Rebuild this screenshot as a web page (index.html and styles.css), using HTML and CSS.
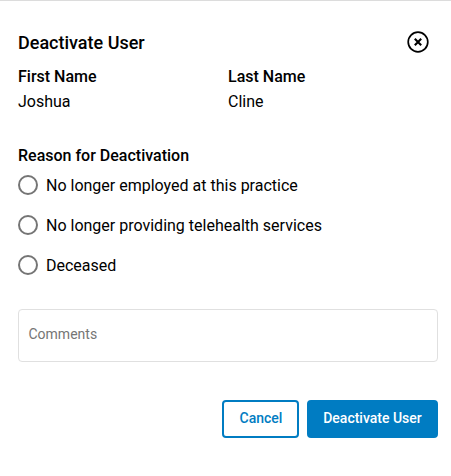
FILE: index.html
```html
<!DOCTYPE html>
<html lang="en">
<head>
    <meta charset="UTF-8">
    <title>Deactivate User</title>
    <link rel="stylesheet" href="styles.css">
</head>
<body>
    <form class="dialog">
        <div class="dialog-header">
            <h1>Deactivate User</h1>
            <button type="button" class="close" aria-label="Close">
                <svg width="22" height="22" viewBox="0 0 22 22" fill="none" stroke="#000">
                    <circle cx="11" cy="11" r="9.8" stroke-width="1.7"/>
                    <path d="M7.8 7.8l6.4 6.4M14.2 7.8l-6.4 6.4" stroke-width="2.1"/>
                </svg>
            </button>
        </div>
        <div class="names">
            <div>
                <h2>First Name</h2>
                <p>Joshua</p>
            </div>
            <div>
                <h2>Last Name</h2>
                <p>Cline</p>
            </div>
        </div>
        <h2 class="reason-title">Reason for Deactivation</h2>
        <div class="reasons">
            <label><input type="radio" name="reason"><span>No longer employed at this practice</span></label>
            <label><input type="radio" name="reason"><span>No longer providing telehealth services</span></label>
            <label><input type="radio" name="reason"><span>Deceased</span></label>
        </div>
        <textarea class="comments" placeholder="Comments"></textarea>
        <div class="actions">
            <button type="button" class="btn">Cancel</button>
            <button type="button" class="btn btn-primary">Deactivate User</button>
        </div>
    </form>
</body>
</html>
```

FILE: styles.css
```css
*{
    margin: 0;
    padding: 0;
    box-sizing: border-box;
}
body{
    background: #fff;
    color: #000;
    font-family: Roboto, "Liberation Sans", sans-serif;
    font-size: 16px;
    line-height: 20px;
}
.dialog{
    height: 476px;
    padding: 30px 13px 0 18px;
    border-top: 1px solid #dcdcdc;
}
.dialog-header{
    display: flex;
    justify-content: space-between;
    height: 22px;
    padding-right: 9px;
}
h1{
    font-size: 18px;
    font-weight: 500;
    line-height: 24px;
}
h2{
    font-size: 16px;
    font-weight: 500;
    line-height: 20px;
}
.close{
    width: 22px;
    height: 22px;
    border: none;
    background: none;
    cursor: pointer;
}
.close svg{
    display: block;
}
.names{
    display: grid;
    grid-template-columns: 210px 210px;
    margin-top: 14px;
}
.names p{
    margin-top: 5px;
}
.reason-title{
    margin-top: 34px;
}
.reasons{
    display: flex;
    flex-direction: column;
    gap: 20px;
    margin-top: 9px;
}
.reasons label{
    display: flex;
    align-items: center;
    gap: 8px;
    height: 20px;
}
.reasons span{
    padding-top: 2px;
}
.reasons input{
    appearance: none;
    width: 20px;
    height: 20px;
    border: 2px solid #757575;
    border-radius: 50%;
}
.comments{
    display: block;
    width: 420px;
    height: 53px;
    margin-top: 34px;
    padding: 14px 9.5px;
    border: 1px solid #e0e0e0;
    border-radius: 4px;
    font-family: inherit;
    font-size: 14px;
    line-height: 20px;
    resize: none;
}
.comments::placeholder{
    color: #757575;
}
.actions{
    display: flex;
    justify-content: flex-end;
    gap: 8px;
    margin-top: 38px;
}
.btn{
    width: 77px;
    height: 38px;
    padding: 0 0 2px 1px;
    border: 2px solid #007cc2;
    border-radius: 4px;
    background: #fff;
    color: #007cc2;
    font-family: inherit;
    font-size: 14px;
    font-weight: 500;
    cursor: pointer;
}
.btn-primary{
    width: 131px;
    padding-left: 0;
    background: #007cc2;
    color: #fff;
}
```
